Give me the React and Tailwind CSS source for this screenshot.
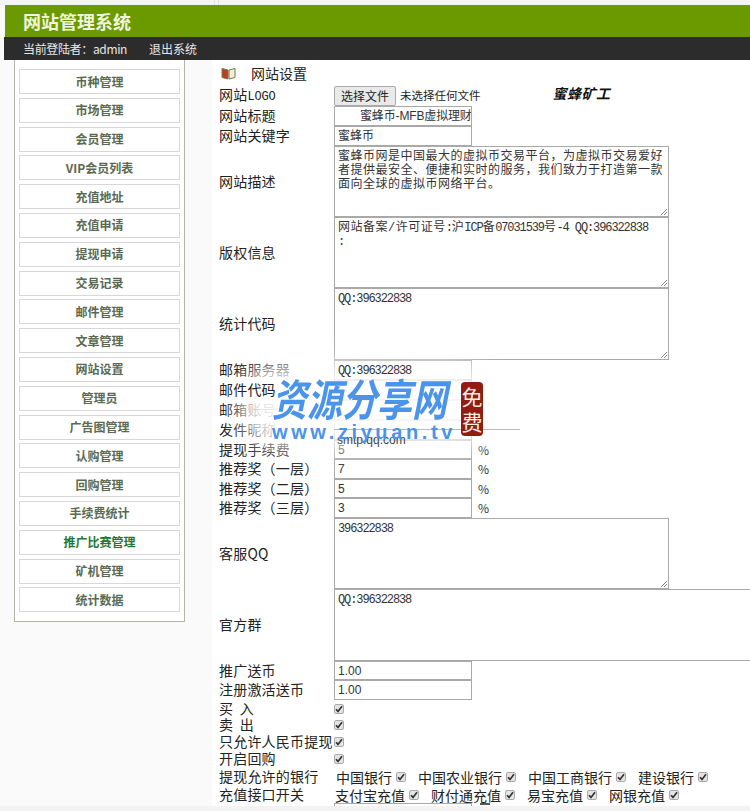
import React from "react";

const cjk = "font-['Noto_Sans_CJK_SC','Liberation_Sans',sans-serif]";
const menu = ["币种管理","市场管理","会员管理","VIP会员列表","充值地址","充值申请","提现申请","交易记录","邮件管理","文章管理","网站设置","管理员","广告图管理","认购管理","回购管理","手续费统计","推广比赛管理","矿机管理","统计数据"];

function Check() {
  return (
    <span className="inline-flex w-[10px] h-[10px] shrink-0 items-center justify-center rounded-[2px] border border-[#aaa] bg-[#e4e4e4]">
      <svg width="8" height="8" viewBox="0 0 8 8"><path d="M1 4.2 L3 6.4 L7 1.2" fill="none" stroke="#333" strokeWidth="1.7" /></svg>
    </span>
  );
}

function Row({ h, label, children, labelClass = "" }) {
  return (
    <div className="flex shrink-0 items-center" style={{ height: h }}>
      <div className={`w-[115px] shrink-0 -translate-y-[1px] whitespace-pre text-[14px] leading-[16px] tracking-[0.2px] text-[#222] ${labelClass}`}>{label}</div>
      {children}
    </div>
  );
}

function Input({ children, pad = "pl-[3px]" }) {
  return (
    <div className={`h-full w-[138px] shrink-0 overflow-hidden whitespace-nowrap border border-[#a9a9a9] bg-white ${pad} text-[12px] leading-[18px] text-[#333] font-['Liberation_Sans','Noto_Sans_CJK_SC',sans-serif]`}>{children}</div>
  );
}

function Area({ children, wide }) {
  return (
    <div className={`relative h-full ${wide ? "w-[440px] shrink-0 border-r-0" : "w-[335px]"} border border-[#a9a9a9] bg-white px-[3px] pt-[3px] text-[12px] leading-[14px] tracking-[0.5px] text-[#333] font-['Liberation_Mono','Noto_Sans_CJK_SC',monospace]`}>
      {children}
      {!wide && (
        <svg className="absolute bottom-0 right-0" width="9" height="9" viewBox="0 0 9 9"><path d="M8 2 L2 8 M8 5 L5 8" stroke="#888" strokeWidth="1" /></svg>
      )}
    </div>
  );
}

const Num = ({ children }) => <span className="tracking-[-1.1px]">{children}</span>;

function Opt({ t }) {
  return <span className="flex items-center gap-[4px] whitespace-nowrap"><span>{t}</span><Check /></span>;
}

const Pct = () => <span className="ml-[6px] text-[12px] text-[#333]">%</span>;

export default function App() {
  return (
    <div className={`relative flex h-[811px] w-[750px] flex-col overflow-hidden bg-[#fafafa] ${cjk}`}>
      <div className="flex h-[5px] shrink-0 gap-[3px] bg-[#f4f4f4] pl-[16px]">
        <div className="h-full w-[199px] border-r border-[#e2e2e2]" />
        <div className="h-full w-[530px] border-l border-[#e2e2e2]" />
      </div>
      <div className="ml-[5px] flex h-[32px] shrink-0 items-center bg-[#6b9a00] pl-[18px] text-[18px] font-bold text-[#eef5dc]">网站管理系统</div>
      <div className="ml-[4px] flex h-[23px] shrink-0 items-center gap-[22px] bg-[#2c2c2c] pl-[19px] text-[12px] text-[#e8e8e8]">
        <span className="tracking-[-0.35px]">当前登陆者：admin</span>
        <span>退出系统</span>
      </div>
      <div className="flex min-h-0 flex-1">
        <div className="ml-[14px] h-[562px] w-[171px] shrink-0 border border-t-0 border-[#b4b4a8] bg-white pl-[4px] pr-[4px] pt-[9px]">
          <div className="flex flex-col gap-[3.8px]">
            {menu.map((m) => (
              <div key={m} className={`flex h-[25px] items-center justify-center border border-[#d8d8d8] bg-white text-[12px] font-bold ${m === "推广比赛管理" ? "text-[#1f7a2e]" : "text-[#5a6a50]"}`}>{m}</div>
            ))}
          </div>
        </div>
        <div className="ml-[27px] flex min-w-0 flex-1 flex-col bg-white pl-[7px]">
          <div className="flex h-[26px] shrink-0 items-center pl-[2px] text-[14px] text-[#222]">
            <svg width="15" height="13" viewBox="0 0 15 13" className="shrink-0">
              <path d="M1 1.5 L7 3 V12 L1 10.5 Z" fill="#c0392b" stroke="#6f7f3a" strokeWidth="1" />
              <path d="M8 3 L14 1.5 V10.5 L8 12 Z" fill="#f4ecd8" stroke="#6f7f3a" strokeWidth="1" />
            </svg>
            <span className="ml-[15px]">网站设置</span>
          </div>
          <Row h={20} label={<>网站<span className="font-['Liberation_Mono'] text-[12px] tracking-[-0.2px]">LOGO</span></>}>
            <div className="flex h-full items-center">
              <div className="flex h-full w-[62px] items-center justify-center rounded-[2px] border border-[#aaa] bg-[#e9e9e9] text-[12px] text-[#222]">选择文件</div>
              <span className="ml-[4px] text-[11.5px] text-[#222]">未选择任何文件</span>
              <span className="ml-[72px] text-[14px] font-bold italic tracking-[0.5px] text-[#111] -translate-y-[3px]">蜜蜂矿工</span>
            </div>
          </Row>
          <Row h={20} label="网站标题"><Input pad="pl-[25px]"><span className="tracking-[-0.15px]">蜜蜂币-MFB虚拟理财</span></Input></Row>
          <Row h={20} label="网站关键字"><Input>蜜蜂币</Input></Row>
          <Row h={71} label="网站描述"><Area>蜜蜂币网是中国最大的虚拟币交易平台，为虚拟币交易爱好者提供最安全、便捷和实时的服务，我们致力于打造第一款面向全球的虚拟币网络平台。</Area></Row>
          <Row h={71} label="版权信息"><Area>网站备案/许可证号<Num>:</Num>沪<Num>ICP</Num>备<Num>07031539</Num>号<Num>-4 QQ:396322838</Num><br /><Num>:</Num></Area></Row>
          <Row h={72} label="统计代码"><Area><Num>QQ:396322838</Num></Area></Row>
          <Row h={20} label="邮箱服务器"><Input><span className="relative z-10 font-['Liberation_Mono'] tracking-[-1.1px]">QQ:396322838</span></Input></Row>
          <Row h={20} label="邮件代码" labelClass="relative z-10"><Input> </Input></Row>
          <Row h={20} label="邮箱账号"><Input> </Input></Row>
          <Row h={20} label="发件昵称"><Input> </Input></Row>
          <Row h={19} label="提现手续费"><Input>5</Input><Pct /></Row>
          <Row h={20} label="推荐奖（一层）"><Input>7</Input><Pct /></Row>
          <Row h={19} label="推荐奖（二层）"><Input>5</Input><Pct /></Row>
          <Row h={20} label="推荐奖（三层）"><Input>3</Input><Pct /></Row>
          <Row h={71} label="客服QQ"><Area><Num>396322838</Num></Area></Row>
          <Row h={72} label="官方群"><Area wide><Num>QQ:396322838</Num></Area></Row>
          <Row h={19} label="推广送币"><Input>1.00</Input></Row>
          <Row h={20} label="注册激活送币"><Input>1.00</Input></Row>
          <Row h={17} label={"买\u00a0\u00a0入"}><Check /></Row>
          <Row h={16} label={"卖\u00a0\u00a0出"}><Check /></Row>
          <Row h={17} label="只允许人民币提现"><Check /></Row>
          <Row h={17} label="开启回购"><Check /></Row>
          <Row h={19} label="提现允许的银行">
            <div className="flex gap-[12px] pl-[2px] text-[14px] leading-[16px] text-[#222]">
              <Opt t="中国银行" /><Opt t="中国农业银行" /><Opt t="中国工商银行" /><Opt t="建设银行" />
            </div>
          </Row>
          <Row h={17} label="充值接口开关">
            <div className="flex gap-[12px] pl-[1px] text-[14px] leading-[16px] text-[#222]">
              <Opt t="支付宝充值" /><Opt t="财付通充值" /><Opt t="易宝充值" /><Opt t="网银充值" />
            </div>
          </Row>
          <Row h={20} label="首次交易币数">
            <Input> </Input>
            <span className="ml-[8px] h-[2px] w-[10px] self-start bg-[#555]" />
          </Row>
        </div>
      </div>

      {/* bottom edge */}
      <div className="absolute bottom-0 left-0 right-0 h-[5px] bg-[#f3f3f3]" />

      {/* watermark */}
      <div className="absolute left-[240px] top-[364px] h-[84px] w-[256px] rounded-[40px] bg-white blur-md opacity-90" />
      <div className="absolute left-[334px] top-[429px] h-[1px] w-[186px] bg-[#bbb]" />
      <div className="absolute left-[337px] top-[433px] text-[12px] leading-[14px] text-[#444] font-['Liberation_Sans']">smtp.qq.com</div>
      <div className="absolute left-[272px] top-[374px] origin-center scale-y-[1.25] whitespace-nowrap text-[35px] font-bold italic leading-[46px] text-[#4a94ec]">资源分享网</div>
      <div className="absolute left-[272px] top-[421px] whitespace-nowrap text-[20px] font-bold leading-[22px] tracking-[3.6px] text-[#4a94ec] font-['Liberation_Sans']">www.ziyuan.tv</div>
      <div className="absolute left-[461px] top-[382px] flex h-[54px] w-[22px] flex-col items-center justify-center rounded-[4px] bg-[#8f1d12] text-[21px] leading-[25px] text-[#f6ece4]">
        <span>免</span>
        <span>费</span>
      </div>
    </div>
  );
}
